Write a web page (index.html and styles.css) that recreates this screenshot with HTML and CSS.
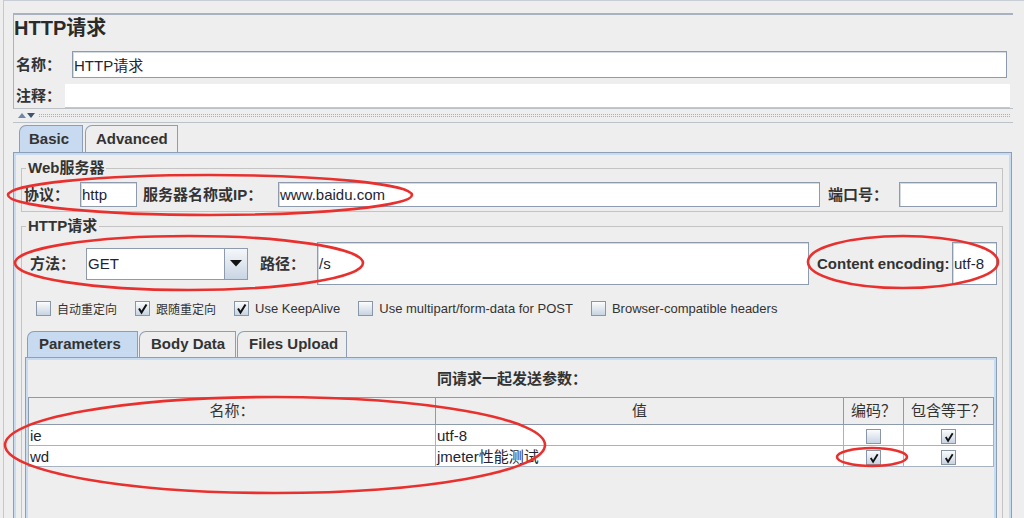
FILE: index.html
```html
<!DOCTYPE html>
<html lang="zh-CN">
<head>
	<meta charset="UTF-8">
	<title>HTTP请求</title>
	<link rel="stylesheet" href="styles.css">
</head>
<body>

	<div class="frame">
		<div class="main">
			<div class="headPanel">
				<div class="title">HTTP请求</div>
				<div class="nameRow">
					<span class="lbl nameLbl">名称：</span>
					<div class="field nameField">HTTP请求</div>
				</div>
				<div class="noteRow">
					<span class="lbl noteLbl">注释：</span>
					<div class="noteArea"></div>
				</div>
			</div>

			<div class="splitter">
				<svg class="arrows" width="18" height="7" viewBox="0 0 18 7">
					<polygon points="0,6 4,1 8,6" fill="#6f86a8"/>
					<polygon points="9,1 17,1 13,6" fill="#3f5373"/>
				</svg>
				<span class="dots"></span>
			</div>

			<div class="lowerPane">
				<div class="tabStrip">
					<span class="tab on tabBasic">Basic</span>
					<span class="tab tabAdv">Advanced</span>
				</div>
				<div class="tabBody">
					<!-- Web服务器 -->
					<fieldset class="group webGroup">
						<legend>Web服务器</legend>
						<div class="serverRow">
							<span class="lbl protoLbl">协议：</span>
							<div class="field protoField">http</div>
							<span class="lbl hostLbl">服务器名称或IP：</span>
							<div class="field hostField">www.baidu.com</div>
							<span class="lbl portLbl">端口号：</span>
							<div class="field portField"></div>
						</div>
					</fieldset>

					<!-- HTTP请求 -->
					<fieldset class="group httpGroup">
						<legend>HTTP请求</legend>
						<div class="methodRow">
							<span class="lbl methodLbl">方法：</span>
							<div class="combo">
								<span class="comboText">GET</span>
								<span class="comboBtn">
									<svg width="12" height="7" viewBox="0 0 12 7"><polygon points="0,0 12,0 6,6.5" fill="#111"/></svg>
								</span>
							</div>
							<span class="lbl pathLbl">路径：</span>
							<div class="field pathField">/s</div>
							<span class="lbl encLbl">Content encoding:</span>
							<div class="field encField">utf-8</div>
						</div>

						<div class="checkRow">
							<span class="chk"><span class="box"></span><span class="cjk">自动重定向</span></span>
							<span class="chk"><span class="box"><svg width="13" height="13" viewBox="0 0 13 13"><path d="M3 6.5 L5.5 10.5 L10.5 2.5" fill="none" stroke="#111" stroke-width="2"/></svg></span><span class="cjk">跟随重定向</span></span>
							<span class="chk"><span class="box"><svg width="13" height="13" viewBox="0 0 13 13"><path d="M3 6.5 L5.5 10.5 L10.5 2.5" fill="none" stroke="#111" stroke-width="2"/></svg></span><span>Use KeepAlive</span></span>
							<span class="chk"><span class="box"></span><span>Use multipart/form-data for POST</span></span>
							<span class="chk"><span class="box"></span><span>Browser-compatible headers</span></span>
						</div>

						<div class="subTabs">
							<span class="tab subTab on tabParam">Parameters</span>
							<span class="tab subTab tabBody2">Body Data</span>
							<span class="tab subTab tabFiles">Files Upload</span>
						</div>
						<div class="subBody">
							<div class="tableTitle">同请求一起发送参数：</div>
							<table class="params">
								<colgroup>
									<col style="width:407px">
									<col style="width:408px">
									<col style="width:60px">
									<col style="width:90px">
								</colgroup>
								<tr>
									<th>名称：</th>
									<th>值</th>
									<th>编码？</th>
									<th>包含等于？</th>
								</tr>
								<tr>
									<td>ie</td>
									<td>utf-8</td>
									<td class="mid"><span class="box small"></span></td>
									<td class="mid"><span class="box small"><svg width="12" height="12" viewBox="0 0 13 13"><path d="M3 6.5 L5.5 10.5 L10.5 2.5" fill="none" stroke="#111" stroke-width="2"/></svg></span></td>
								</tr>
								<tr>
									<td>wd</td>
									<td>jmeter性能测试</td>
									<td class="mid"><span class="box small"><svg width="12" height="12" viewBox="0 0 13 13"><path d="M3 6.5 L5.5 10.5 L10.5 2.5" fill="none" stroke="#111" stroke-width="2"/></svg></span></td>
									<td class="mid"><span class="box small"><svg width="12" height="12" viewBox="0 0 13 13"><path d="M3 6.5 L5.5 10.5 L10.5 2.5" fill="none" stroke="#111" stroke-width="2"/></svg></span></td>
								</tr>
							</table>
						</div>
					</fieldset>
				</div>
			</div>
		</div>
	</div>

	<!-- 红圈标注 -->
	<svg class="marks" width="1024" height="518" viewBox="0 0 1024 518">
		<g fill="none" stroke="#e8312e" stroke-width="2.6">
			<ellipse cx="210" cy="195" rx="202" ry="20"/>
			<ellipse cx="189" cy="263" rx="174" ry="27"/>
			<ellipse cx="903" cy="262" rx="95" ry="26"/>
			<ellipse cx="275" cy="445" rx="270" ry="48"/>
			<ellipse cx="872" cy="457" rx="35" ry="9"/>
		</g>
	</svg>

</body>
</html>
```

FILE: styles.css
```css
*{box-sizing: border-box;}
html,body{margin: 0;padding: 0;overflow: hidden;}
body{width: 1024px;height: 518px;position: relative;background: #eeeeee;color: #333;font-family: "Liberation Sans", "Noto Sans CJK SC", sans-serif;}

.frame{margin-left: 3px;height: 518px;border-top: 1px solid #c9ced6;border-left: 1px solid #c3c9d1;padding: 12px 0 0 9px;overflow: hidden;}
.main{width: 1000px;}

/* top panel */
.headPanel{height: 96px;border-top: 2px solid #a9b2be;border-left: 1px solid #aab2bc;border-bottom: 1px solid #bcc1c8;padding-left: 2px;}
.title{height: 26px;margin-left: -2px;line-height: 26px;font-size: 20px;font-weight: bold;color: #2a2a2a;}
.nameRow{display: flex;align-items: center;height: 27px;margin-top: 10px;}
.noteRow{display: flex;align-items: center;height: 24px;margin-top: 6px;}
.lbl{flex: none;font-size: 15px;font-weight: bold;line-height: 18px;color: #333;white-space: nowrap;}
.nameLbl{width: 56px;}
.noteLbl{width: 49px;}
.nameField{width: 935px;height: 27px;}
.noteArea{flex: 1;height: 24px;margin-right: 3px;background: #fff;border-bottom: 1px solid #c3c8cf;}

.field{display: flex;align-items: center;background: #fff;border: 1px solid #8e9bad;box-shadow: inset 1px 1px 0 #d3dae3;padding-left: 1px;font-size: 15px;color: #1e2433;white-space: nowrap;overflow: hidden;}

/* splitter */
.splitter{display: flex;align-items: center;height: 13px;padding-left: 5px;}
.arrows{flex: none;}
.dots{flex: 1;height: 3px;margin: 0 3px 0 3px;border-top: 1px dotted #aab0b9;border-bottom: 1px dotted #aab0b9;}

/* tabs */
.lowerPane{border-top: 1px solid #bcc2ca;}
.tabStrip{display: flex;align-items: flex-end;height: 29px;padding: 2px 0 0 6px;}
.tab{height: 27px;line-height: 25px;border: 1px solid #8c9db4;border-bottom: none;border-top-left-radius: 7px;background: #eeeeee;font-size: 15px;font-weight: bold;color: #333;white-space: nowrap;}
.tab.on{background: #c8daf0;}
.tabBasic{width: 64px;padding-left: 9px;}
.tabAdv{width: 93px;padding-left: 10px;margin-left: 2px;}

.tabBody{height: 380px;margin-right: 1px;border: 1px solid #8c9fb7;box-shadow: inset 2px 2px 0 #c9dbf0, inset -2px 0 0 #c9dbf0;padding: 6px 8px 0 7px;}

/* titled groups */
.group{margin: 0;min-width: 0;padding: 0 5px 4px 0;border: 1px solid #c4c4c4;}
.group legend{margin-left: 4px;padding: 0 2px;font-size: 15px;font-weight: bold;line-height: 18px;color: #333;}

.serverRow{display: flex;align-items: center;height: 25px;margin-top: 5px;padding-left: 2px;}
.protoLbl{width: 56px;}
.protoField{width: 57px;height: 25px;}
.hostLbl{width: 135px;margin-left: 6px;}
.hostField{flex: 1;height: 25px;}
.portLbl{width: 71px;margin-left: 8px;}
.portField{width: 98px;height: 25px;}

.httpGroup{margin-top: 5px;height: 330px;}
.methodRow{display: flex;align-items: center;height: 43px;margin-top: 7px;padding-left: 8px;}
.methodLbl{width: 56px;}
.combo{flex: none;display: flex;width: 162px;height: 32px;background: #fff;border: 1px solid #8e9bad;}
.comboText{flex: 1;padding-left: 1px;font-size: 15px;line-height: 30px;color: #1e2433;}
.comboBtn{flex: none;display: flex;align-items: center;justify-content: center;width: 23px;border-left: 1px solid #8e9bad;background: linear-gradient(#f4f7fa, #c9d5e3);}
.pathLbl{width: 57px;margin-left: 12px;}
.pathField{flex: 1;height: 43px;}
.encLbl{width: 135px;margin-left: 8px;}
.encField{width: 45px;height: 43px;}

/* checkboxes */
.checkRow{display: flex;align-items: center;height: 15px;margin-top: 16px;padding-left: 14px;font-size: 13px;color: #333;}
.chk{display: flex;align-items: center;margin-right: 18px;white-space: nowrap;}
.chk .box{margin-right: 6px;}
.cjk{font-size: 12px;}
.box{display: inline-flex;align-items: center;justify-content: center;flex: none;width: 15px;height: 15px;border: 1px solid #8996a8;background: linear-gradient(#fbfcfd, #c8d4e2);}
.box.small{width: 15px;height: 15px;vertical-align: middle;}

/* inner tabs */
.subTabs{display: flex;align-items: flex-end;height: 26px;margin: 15px 0 0 3px;padding-left: 2px;}
.subTab{height: 26px;line-height: 24px;padding-left: 11px;}
.tabParam{width: 111px;}
.tabBody2{width: 97px;margin-left: 1px;}
.tabFiles{width: 110px;margin-left: 1px;}

.subBody{height: 200px;margin-left: 3px;border: 1px solid #8c9fb7;box-shadow: inset 2px 2px 0 #c9dbf0, inset -2px 0 0 #c9dbf0;padding-left: 2px;}
.tableTitle{height: 18px;margin-top: 12px;line-height: 18px;text-align: center;font-size: 15px;font-weight: bold;color: #333;}

.params{width: 965px;margin-top: 9px;border-collapse: collapse;table-layout: fixed;font-size: 15px;}
.params th{height: 27px;padding: 0;border: 1px solid #8d9aab;background: #eeeeee;font-weight: normal;color: #333;line-height: 18px;}
.params td{height: 21px;padding: 0 0 0 1px;border: 1px solid #a9b3c0;background: #fff;color: #1e2433;line-height: 19px;white-space: nowrap;}
.params td.mid{text-align: center;padding: 0;}

.marks{position: absolute;left: 0;top: 0;pointer-events: none;}
```
